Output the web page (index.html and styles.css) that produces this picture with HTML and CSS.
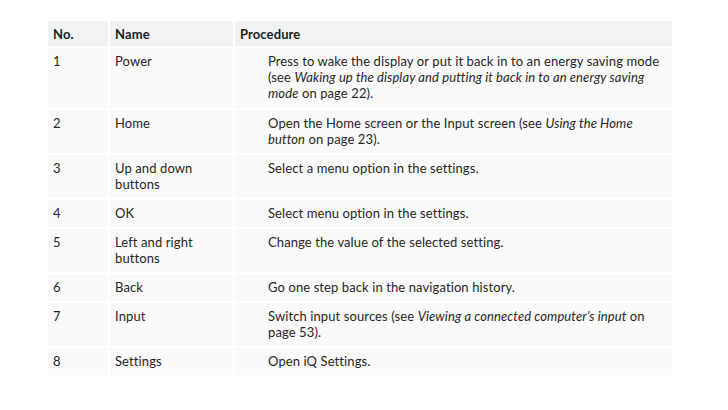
FILE: index.html
```html
<!DOCTYPE html>
<html>
<head>
<meta charset="utf-8">
<link rel="stylesheet" href="styles.css">
</head>
<body>
<table class="spec">
  <colgroup>
    <col class="c-no">
    <col class="c-name">
    <col class="c-proc">
  </colgroup>
  <thead>
    <tr><th>No.</th><th>Name</th><th>Procedure</th></tr>
  </thead>
  <tbody>
    <tr class="tall">
      <td>1</td><td>Power</td>
      <td class="proc">Press to wake the display or put it back in to an energy saving mode (see <em>Waking up the display and putting it back in to an energy saving mode</em> on page 22).</td>
    </tr>
    <tr>
      <td>2</td><td>Home</td>
      <td class="proc">Open the Home screen or the Input screen (see <em>Using the Home button</em> on page 23).</td>
    </tr>
    <tr>
      <td>3</td><td>Up and down buttons</td>
      <td class="proc">Select a menu option in the settings.</td>
    </tr>
    <tr>
      <td>4</td><td>OK</td>
      <td class="proc">Select menu option in the settings.</td>
    </tr>
    <tr>
      <td>5</td><td>Left and right buttons</td>
      <td class="proc">Change the value of the selected setting.</td>
    </tr>
    <tr>
      <td>6</td><td>Back</td>
      <td class="proc">Go one step back in the navigation history.</td>
    </tr>
    <tr>
      <td>7</td><td>Input</td>
      <td class="proc">Switch input sources (see <em>Viewing a connected computer’s input</em> on page 53).</td>
    </tr>
    <tr>
      <td>8</td><td>Settings</td>
      <td class="proc">Open iQ Settings.</td>
    </tr>
  </tbody>
</table>
</body>
</html>
```
FILE: styles.css
```css
html, body {
  margin: 0;
  padding: 0;
  background: #ffffff;
}
body {
  padding: 19px 0 0 46px;
  font-family: Lato, "Open Sans", sans-serif;
  font-size: 13px;
  letter-spacing: 0.1px;
  color: #262626;
}
.spec {
  border-collapse: separate;
  border-spacing: 2px;
  table-layout: fixed;
  width: 628px;
}
.c-no { width: 60px; }
.c-name { width: 123px; }
.c-proc { width: 437px; }
.spec th {
  background: #f1f2f3;
  text-align: left;
  font-weight: 700;
  padding: 5px 5px 4px 5px;
  line-height: 16px;
  color: #1d1d1d;
}
.spec td {
  background: #fafafa;
  vertical-align: top;
  padding: 5px 5px 6px 5px;
  line-height: 16px;
}
.spec td.proc {
  padding-left: 33px;
  padding-right: 8px;
}
.spec tr.tall td {
  padding-bottom: 7px;
}
.spec em {
  font-style: italic;
}
```
